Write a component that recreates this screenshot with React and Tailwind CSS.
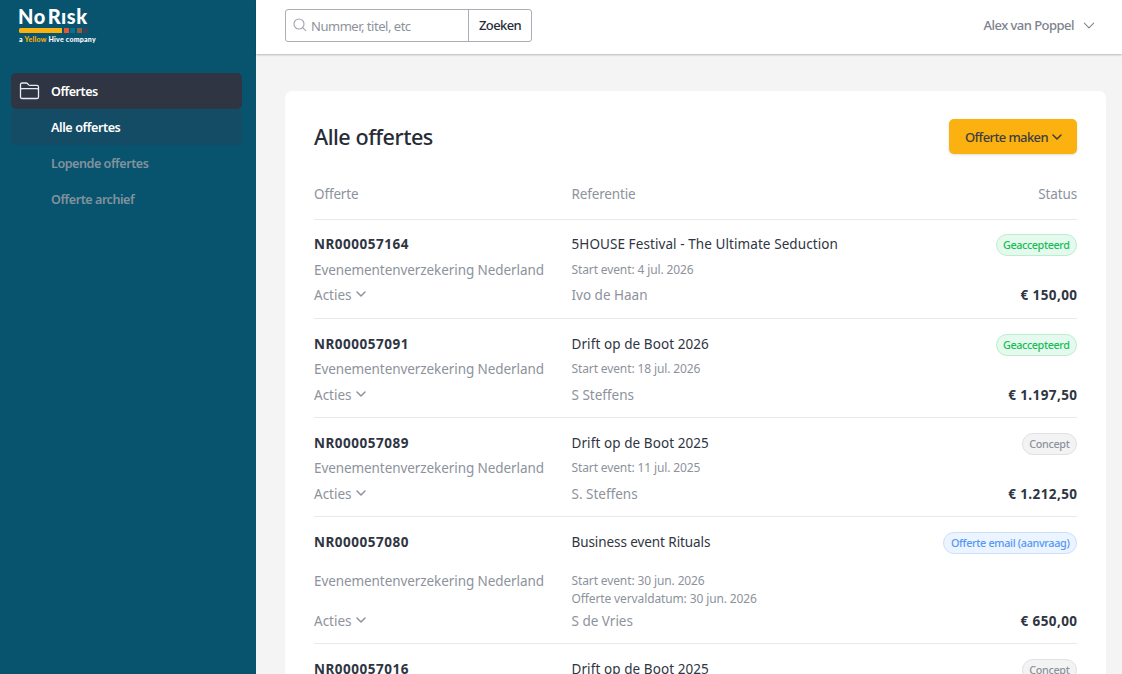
const navItems = [
  { label: 'Alle offertes', active: true },
  { label: 'Lopende offertes', active: false },
  { label: 'Offerte archief', active: false },
];

const quotes = [
  { nr: 'NR000057164', title: '5HOUSE Festival - The Ultimate Seduction', dates: ['Start event: 4 jul. 2026'], contact: 'Ivo de Haan', status: 'Geaccepteerd', tone: 'green', price: '€ 150,00' },
  { nr: 'NR000057091', title: 'Drift op de Boot 2026', dates: ['Start event: 18 jul. 2026'], contact: 'S Steffens', status: 'Geaccepteerd', tone: 'green', price: '€ 1.197,50' },
  { nr: 'NR000057089', title: 'Drift op de Boot 2025', dates: ['Start event: 11 jul. 2025'], contact: 'S. Steffens', status: 'Concept', tone: 'gray', price: '€ 1.212,50' },
  { nr: 'NR000057080', title: 'Business event Rituals', titleClass: 'tracking-[-0.08px]', dates: ['Start event: 30 jun. 2026', 'Offerte vervaldatum: 30 jun. 2026'], contact: 'S de Vries', status: 'Offerte email (aanvraag)', tone: 'blue', price: '€ 650,00' },
  { nr: 'NR000057016', title: 'Drift op de Boot 2025', dates: [], contact: '', status: 'Concept', tone: 'gray', price: '' },
];

const tones = {
  green: 'bg-[#e6f9ee] border-[#b9efcd] text-[#16bf56] tracking-[-0.4px]',
  gray: 'bg-[#f3f3f4] border-[#e1e1e3] text-[#8d929c] tracking-[-0.32px]',
  blue: 'bg-[#ebf4ff] border-[#c9e0ff] text-[#5598f5] tracking-[-0.32px]',
};

function Chevron({ className, stroke = 1.5 }) {
  return (
    <svg className={className} viewBox="0 0 10 6" fill="none" stroke="currentColor" strokeWidth={stroke} strokeLinecap="round" strokeLinejoin="round">
      <path d="M1 1l4 4 4-4" />
    </svg>
  );
}

function Logo() {
  return (
    <div className="ml-[19px] h-[73px] pt-[5px]">
      <div className="h-[23px] whitespace-nowrap font-['Lato'] text-[20px] font-black leading-[22px] tracking-[0.5px] text-white">
        <span className="-ml-[1px]">No</span>
        <span className="ml-[2px]">Rısk</span>
      </div>
      <div className="flex gap-[1.5px]">
        <span className="h-[5px] w-[43px] rounded-l-[1.5px] bg-[#fbb110]" />
        <span className="h-[5px] w-[5px] bg-[#e2592f]" />
        <span className="h-[5px] w-[5px] bg-[#0a6f98]" />
        <span className="h-[5px] w-[5px] bg-[#8c6246]" />
        <span className="h-[5px] w-[5px] rounded-r-[1.5px] bg-[#3b4556]" />
      </div>
      <div className="mt-[2px] whitespace-nowrap font-['Lato'] text-[7px] font-black leading-[9px] tracking-[0.24px] text-white">
        a <span className="text-[#fbb110]">Yellow</span> Hive company
      </div>
    </div>
  );
}

function Sidebar() {
  return (
    <aside className="h-full w-[256px] shrink-0 bg-[#08546f]">
      <Logo />
      <nav className="ml-[11px] w-[231px] text-[12.6px] font-semibold">
        <div className="flex h-9 items-center rounded-[5px] bg-[#2f3542] pl-[8px] text-white">
          <svg className="mr-[11px] h-[21px] w-[21px]" viewBox="0 0 21 21" fill="none" stroke="#e9ecf0" strokeWidth="1.3" strokeLinejoin="round">
            <path d="M1.500 9.800V3.600q0-1.600 1.600-1.600h4.100q.7 0 1.200.5l1.300 1.400q.5.500 1.200.500h7q1.600 0 1.600 1.600V15.900q0 1.600-1.600 1.600H3.100q-1.600 0-1.600-1.600V9q0-1.400 1.600-1.400h14.800q1.600 0 1.600 1.400" />
          </svg>
          <span className="pt-[2px] tracking-[-0.5px]">Offertes</span>
        </div>
        {navItems.map((item) => (
          <div
            key={item.label}
            className={
              item.active
                ? 'flex h-9 items-center rounded-[5px] bg-[#144c66] pl-10 pt-[2px] tracking-[-0.42px] text-white'
                : 'flex h-9 items-center rounded-[5px] pl-10 pt-[2px] tracking-[-0.48px] text-[#82929d]'
            }
          >
            {item.label}
          </div>
        ))}
      </nav>
    </aside>
  );
}

function Header() {
  return (
    <header className="relative flex h-[54px] shrink-0 items-start justify-between bg-white pl-[29px] pr-[27px] shadow-[0_1px_2px_rgba(0,0,0,0.25)]">
      <div className="mt-[9px] flex h-[33px] w-[247px] rounded-[3px] border border-[#a9adb6] text-[13px]">
        <div className="flex flex-1 items-center border-r border-[#a9adb6] pl-[7px] text-[#8d929c]">
          <svg className="mb-px mr-[4px] h-[14px] w-[14px]" viewBox="0 0 14 14" fill="none" stroke="#a0a4ad" strokeWidth="1.1" strokeLinecap="round">
            <circle cx="6" cy="6" r="5" />
            <path d="M9.700 9.700l3 3" />
          </svg>
          <span className="pt-[2px] tracking-[-0.48px]">Nummer, titel, etc</span>
        </div>
        <button className="w-[62px] font-medium tracking-[-0.6px] text-[#272c37]">Zoeken</button>
      </div>
      <div className="flex h-[51px] items-center text-[13px] font-medium text-[#7d828d]">
        <span className="tracking-[-0.53px]">Alex van Poppel</span>
        <Chevron className="ml-[9px] h-[7px] w-[12px]" stroke={0.9} />
      </div>
    </header>
  );
}

function QuoteRow({ quote, first }) {
  const tall = quote.dates.length > 1;
  const productClass = tall ? 'h-[57px] pt-[18px]' : first ? 'h-[29px] pt-[5px]' : 'h-[29px] pt-[4px]';
  const datesClass = tall ? 'pt-[19px]' : first ? 'pt-[6px]' : 'pt-[5px]';
  return (
    <div
      className={`grid grid-cols-[257.5px_1fr_auto] grid-rows-[21px_auto_22px] border-b border-[#e9e9eb] text-[13.5px] text-[#8d929c] ${first ? 'pb-[12px] pt-[14px]' : 'pb-[11px] pt-[15px]'}`}
    >
      <div className="font-bold leading-[21px] tracking-[0.52px] text-[#2f3542]">{quote.nr}</div>
      <div className={`leading-[21px] text-[#2f3542] ${quote.titleClass ?? 'tracking-[0.08px]'}`}>{quote.title}</div>
      <div className="flex justify-end">
        <span className={`flex h-[22px] items-center rounded-full border px-[6.5px] text-[10.8px] font-medium ${tones[quote.tone]}`}>
          {quote.status}
        </span>
      </div>
      <div className={`leading-[20px] tracking-[-0.08px] ${productClass}`}>Evenementenverzekering Nederland</div>
      <div className={`text-[12px] leading-[18px] tracking-[-0.12px] ${datesClass}`}>
        {quote.dates.map((d) => (
          <div key={d}>{d}</div>
        ))}
      </div>
      <div />
      <div className="flex items-center leading-[22px]">
        <span>Acties</span>
        <Chevron className="mb-[3px] ml-[4px] h-[6px] w-[10px]" />
      </div>
      <div className="leading-[22px]">{quote.contact}</div>
      <div className="-mr-[0.4px] text-right font-bold leading-[22px] tracking-[0.4px] text-[#2f3542]">{quote.price}</div>
    </div>
  );
}

export default function App() {
  return (
    <div className="flex h-[674px] w-[1122px] overflow-hidden bg-[#f4f4f4] font-['Noto_Sans',sans-serif]">
      <Sidebar />
      <div className="flex min-w-0 flex-1 flex-col">
        <Header />
        <main className="ml-[29px] mr-4 mt-[37px] min-h-0 flex-1 overflow-hidden rounded-t-[7px] bg-white px-[29px]">
          <div className="flex h-[85px] items-start justify-between pt-[28px]">
            <h1 className="text-[21.6px] font-medium leading-[36px] tracking-[-0.48px] text-[#272c37]">Alle offertes</h1>
            <button className="flex h-[35px] w-[128px] items-center justify-center rounded-[5px] bg-[#fbb110] pl-px text-[13px] font-medium text-[#3b3d42] shadow-sm">
              <span className="pt-[2px] tracking-[-0.6px]">Offerte maken</span>
              <Chevron className="ml-[4px] h-[6px] w-[10px]" />
            </button>
          </div>
          <div className="grid h-[44px] grid-cols-[257.5px_1fr_auto] border-b border-[#e9e9eb] pt-[8px] text-[13.5px] leading-[20px] tracking-[-0.15px] text-[#8d929c]">
            <div>Offerte</div>
            <div>Referentie</div>
            <div>Status</div>
          </div>
          {quotes.map((q, i) => (
            <QuoteRow key={q.nr} quote={q} first={i === 0} />
          ))}
        </main>
      </div>
    </div>
  );
}
